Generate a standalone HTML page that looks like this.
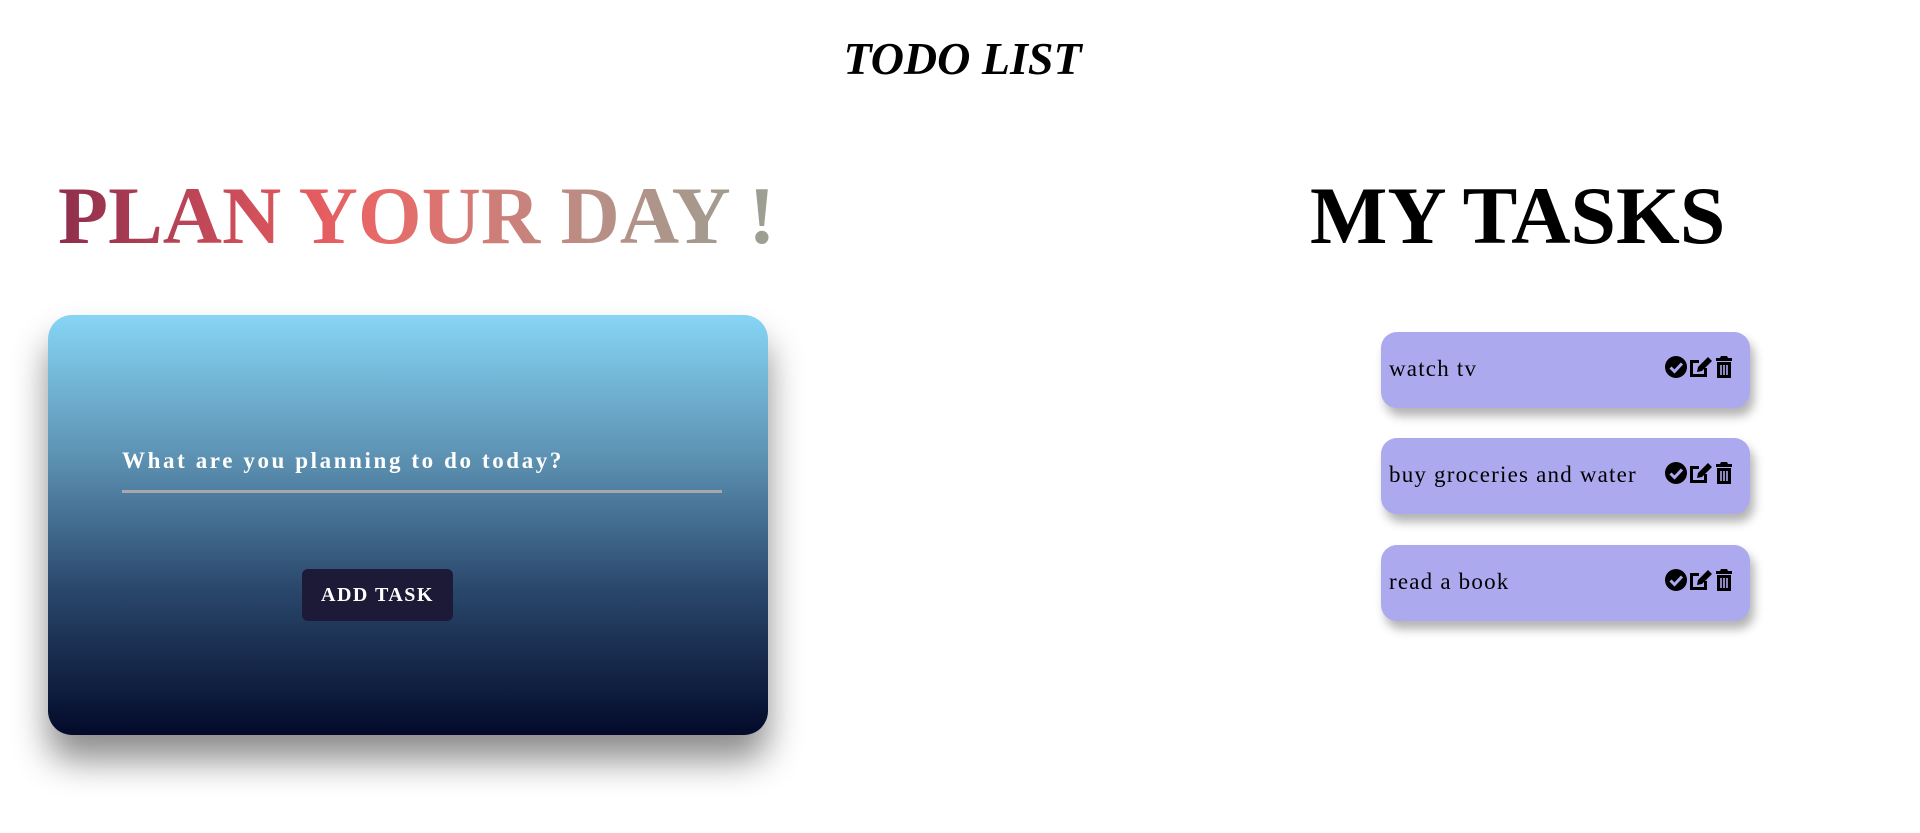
<!DOCTYPE html>
<html><head><meta charset="utf-8"><style>
html,body{margin:0;padding:0;width:1920px;height:833px;background:#fff;overflow:hidden;font-family:Georgia,"Liberation Serif",serif;position:relative}
.t{position:absolute}
#title{left:835px;top:32px;width:255px;text-align:center;font:italic bold 46px "Liberation Serif",cursive;white-space:nowrap;letter-spacing:0px}
#plan{left:58px;top:169px;font-weight:bold;font-size:82px;white-space:nowrap;background:linear-gradient(90deg,#8e2e4c,#e45a5f 35%,#e86a68 45%,#b88f86 75%,#9aa092);-webkit-background-clip:text;background-clip:text;color:transparent}
#my{left:1310px;top:169px;font-weight:bold;font-size:82px;white-space:nowrap}
#card{left:48px;top:315px;width:720px;height:420px;border-radius:24px;background:linear-gradient(#87d5f5,#5b8fb0 35%,#2a486c 65%,#030a2a);box-shadow:0 25px 35px rgba(0,0,0,.45)}
#lbl{left:122px;top:448px;color:#fff;font-weight:bold;font-size:23px;letter-spacing:2.6px;white-space:nowrap}
#line{left:122px;top:490px;width:600px;height:3px;background:#a7a7ad}
#btn{left:302px;top:569px;width:151px;height:52px;border-radius:6px;background:#1c1a36;color:#fff;font-weight:bold;font-size:20px;letter-spacing:1.5px;line-height:52px;text-align:center}
.task{position:absolute;left:1381px;width:369px;height:76px;border-radius:16px;background:#aca9ee;box-shadow:4px 8px 10px rgba(0,0,0,.3)}
.task span{position:absolute;left:8px;top:24px;font-size:23px;letter-spacing:1.2px;color:#000;white-space:nowrap}
.ic{position:absolute;left:283px;top:22px}
</style></head><body>
<div class="t" id="title">TODO LIST</div>
<div class="t" id="plan">PLAN YOUR DAY !</div>
<div class="t" id="my">MY TASKS</div>
<div class="t" id="card"></div>
<div class="t" id="lbl">What are you planning to do today?</div>
<div class="t" id="line"></div>
<div class="t" id="btn">ADD TASK</div>
<div class="task" style="top:332px"><span>watch tv</span><svg class="ic" width="72" height="26" viewBox="0 0 72 26"><circle cx="12" cy="13" r="11"/><path d="M6.5 13.5l4 4 7.5-8" stroke="#aca9ee" stroke-width="3" fill="none"/><path d="M26 6h9v3h-6v11h11v-6h3v9H26z"/><path d="M33 18l1-5 10-10 4 4-10 10z"/><path d="M52 4h4l1-2h6l1 2h4v3H52z"/><path d="M53 8h14v16H53z"/><path d="M57 11v10M60 11v10M63 11v10" stroke="#aca9ee" stroke-width="1.6"/></svg></div>
<div class="task" style="top:438px"><span>buy groceries and water</span><svg class="ic" width="72" height="26" viewBox="0 0 72 26"><circle cx="12" cy="13" r="11"/><path d="M6.5 13.5l4 4 7.5-8" stroke="#aca9ee" stroke-width="3" fill="none"/><path d="M26 6h9v3h-6v11h11v-6h3v9H26z"/><path d="M33 18l1-5 10-10 4 4-10 10z"/><path d="M52 4h4l1-2h6l1 2h4v3H52z"/><path d="M53 8h14v16H53z"/><path d="M57 11v10M60 11v10M63 11v10" stroke="#aca9ee" stroke-width="1.6"/></svg></div>
<div class="task" style="top:545px"><span>read a book</span><svg class="ic" width="72" height="26" viewBox="0 0 72 26"><circle cx="12" cy="13" r="11"/><path d="M6.5 13.5l4 4 7.5-8" stroke="#aca9ee" stroke-width="3" fill="none"/><path d="M26 6h9v3h-6v11h11v-6h3v9H26z"/><path d="M33 18l1-5 10-10 4 4-10 10z"/><path d="M52 4h4l1-2h6l1 2h4v3H52z"/><path d="M53 8h14v16H53z"/><path d="M57 11v10M60 11v10M63 11v10" stroke="#aca9ee" stroke-width="1.6"/></svg></div>
</body></html>
